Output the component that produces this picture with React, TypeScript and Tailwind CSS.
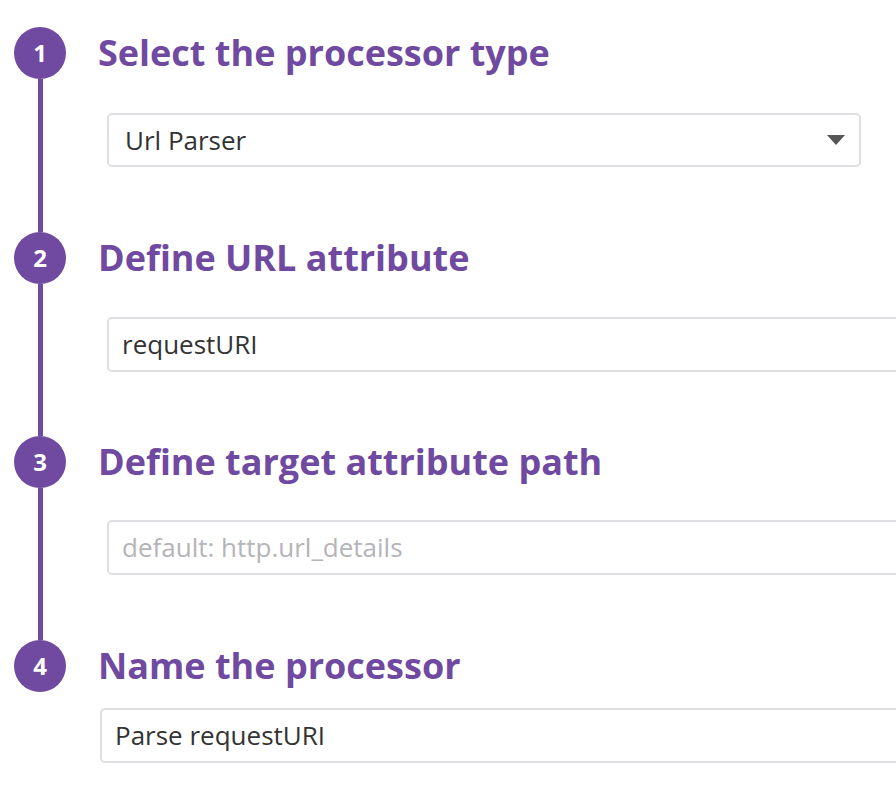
import React from "react";

const font = { fontFamily: '"Open Sans", "Noto Sans", sans-serif' };

function Circle({ n }: { n: number }) {
  return (
    <div className="w-[52px] h-[52px] shrink-0 rounded-full bg-[#7049a1] flex items-center justify-center text-white text-[24px] font-bold leading-none">
      {n}
    </div>
  );
}

function Step({
  n,
  title,
  last,
  pb,
  children,
}: {
  n: number;
  title: string;
  last?: boolean;
  pb: string;
  children: React.ReactNode;
}) {
  return (
    <div className="flex">
      <div className="w-[80px] shrink-0 flex flex-col items-center">
        <Circle n={n} />
        {!last && <div className="flex-1 w-[5px] bg-[#7049a1]" />}
      </div>
      <div className={`flex-1 min-w-0 pl-[18px] ${pb}`}>
        <div className="h-[52px] flex items-center text-[36px] font-bold text-[#7049a1] leading-none whitespace-nowrap">
          {title}
        </div>
        {children}
      </div>
    </div>
  );
}

export default function App() {
  return (
    <div className="w-[896px] h-[788px] bg-white overflow-hidden pt-[27px]" style={font}>
      <Step n={1} title="Select the processor type" pb="pb-[65px]">
        <div className="mt-[34px] ml-[9px] w-[754px] h-[54px] border-2 border-[#dfdfe3] rounded-[5px] flex items-center justify-between pl-[16px] pr-[14px]">
          <span className="text-[26px] text-[#333333]">Url Parser</span>
          <svg width="18" height="10" viewBox="0 0 18 10">
            <path d="M0 0 H18 L9 10 Z" fill="#555555" />
          </svg>
        </div>
      </Step>
      <Step n={2} title="Define URL attribute" pb="pb-[64px]">
        <div className="mt-[33px] ml-[9px] w-[900px] h-[55px] border-2 border-[#dfdfe3] rounded-[5px] flex items-center pl-[13px]">
          <span className="text-[26px] text-[#333333]">requestURI</span>
        </div>
      </Step>
      <Step n={3} title="Define target attribute path" pb="pb-[65px]">
        <div className="mt-[32px] ml-[9px] w-[900px] h-[55px] border-2 border-[#dfdfe3] rounded-[5px] flex items-center pl-[13px]">
          <span className="text-[26px] text-[#b4b4b9]">default: http.url_details</span>
        </div>
      </Step>
      <Step n={4} title="Name the processor" last pb="pb-0">
        <div className="mt-[16px] ml-[2px] w-[900px] h-[55px] border-2 border-[#dfdfe3] rounded-[5px] flex items-center pl-[13px]">
          <span className="text-[26px] text-[#333333]">Parse requestURI</span>
        </div>
      </Step>
    </div>
  );
}
